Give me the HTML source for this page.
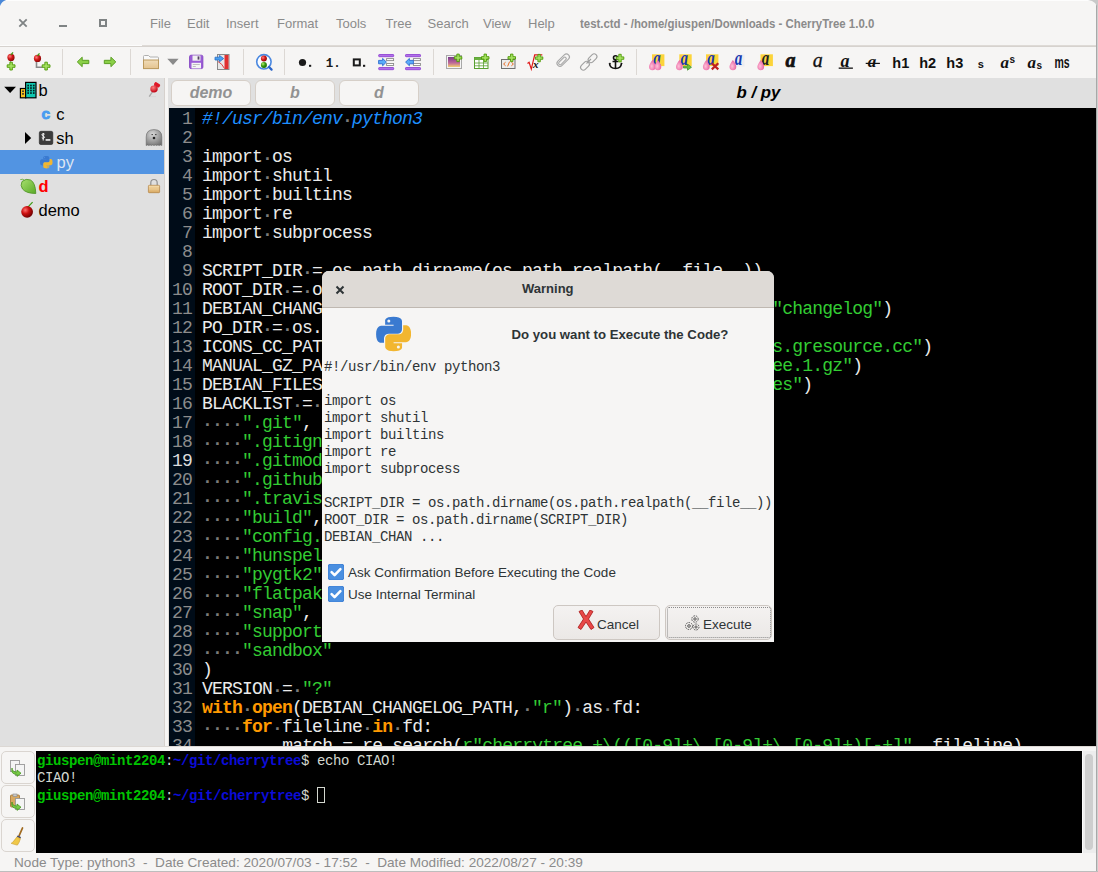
<!DOCTYPE html><html><head><meta charset="utf-8"><style>
*{margin:0;padding:0;box-sizing:border-box}
html,body{width:1098px;height:872px;overflow:hidden;background:#f6f5f4}
body{position:relative;font-family:"Liberation Sans",sans-serif}
.a{position:absolute}
.mono{font-family:"Liberation Mono",monospace}
.menu{top:16px;font-size:13px;color:#8b8b8b;line-height:16px}
.sep{position:absolute;top:49px;width:1px;height:26px;background:#dcd8d4}
#tree{left:0;top:78px;width:164px;height:668px;background:#e0e0e0}
.row{position:absolute;left:0;width:164px;height:24px;font-size:16.5px;line-height:25px;color:#000}
#tabbar{left:168px;top:78px;width:928px;height:30px;background:#e0e0e0}
.tab{position:absolute;top:80px;height:26px;width:80px;border:1px solid #d6cfc8;border-radius:6px;background:#f6f5f4;color:#929292;font-weight:bold;font-style:italic;font-size:16px;text-align:center;line-height:24px}
#editor{left:169px;top:108px;width:927px;height:638px;background:#000;overflow:hidden}
#gutter{left:0;top:0;width:26px;height:638px;background:#000c18}
.code{position:absolute;left:0;top:0;font-family:"Liberation Mono",monospace;font-size:18px;letter-spacing:-0.8px;line-height:19px;white-space:pre;color:#ebebeb}
.ln{position:absolute;left:0;top:0;width:23px;text-align:right;font-family:"Liberation Mono",monospace;font-size:18px;letter-spacing:-0.8px;line-height:19px;white-space:pre;color:#8c8c8c}
.d{color:#7a7a7a;font-weight:bold;position:relative;top:2px}
.s{color:#33cc33}
.k{color:#ff9900;font-weight:bold}
.c{color:#1e8fff;font-style:italic}
#term{left:36px;top:751px;width:1046px;height:102px;background:#000;overflow:hidden}
.tl{position:absolute;left:1px;font-family:"Liberation Mono",monospace;font-size:14px;letter-spacing:-0.4px;line-height:17px;white-space:pre;color:#d3d7cf}
.tg{color:#00c400;font-weight:bold}
.tb{color:#0c0cd8;font-weight:bold}
.tbtn{position:absolute;left:1px;width:34px;height:33px;border:1px solid #dad5d0;border-radius:5px;background:#f6f5f4}
#status{left:14px;top:855px;font-size:13.6px;color:#8b8b8b;line-height:16px;white-space:pre}
#dlg{left:322px;top:271px;width:452px;height:371px;background:#f6f5f4;border-radius:7px 7px 0 0;overflow:hidden}
#dlghead{left:0;top:0;width:452px;height:37px;background:#dedad6;border-bottom:1px solid #bfb8b1}
.dmono{position:absolute;left:2px;font-family:"Liberation Mono",monospace;font-size:14px;letter-spacing:-0.4px;line-height:17px;white-space:pre;color:#2e3436}
.btn{position:absolute;top:605px;height:35px;border:1px solid #cdc7c2;border-radius:5px;background:linear-gradient(#f4f2f1,#ebe8e6);font-size:13.5px;color:#2e3436}
.cb{position:absolute;left:6px;width:16px;height:16px;border-radius:3px;background:#4a90d9}
</style></head><body>
<div class="a" style="left:0;top:0;width:1096px;height:46px;background:#f6f5f4;border-radius:8px 8px 0 0"></div>
<div class="a" style="left:0;top:46px;width:1096px;height:1px;background:#d6d2ce"></div><div class="a" style="left:142px;top:45px;width:954px;height:1px;background:#dedad6"></div><div class="a" style="left:0;top:45px;width:142px;height:1px;background:#fcfcfc"></div>
<div class="a" style="left:1096px;top:0;width:1px;height:872px;background:#a8a8a8"></div><div class="a" style="left:1097px;top:0;width:1px;height:872px;background:#d0d0d0"></div>
<div class="a" style="left:0;top:871px;width:1098px;height:1px;background:#bdbdbd"></div>
<svg class="a" style="left:0;top:0" width="8" height="8"><path d="M0 0H6Q1.5 1.5 0 6Z" fill="#4a88d8"/></svg>
<div class="a" style="left:6px;top:0;width:1084px;height:1px;background:#fdfdfd"></div>
<svg class="a" style="left:1088px;top:0" width="10" height="10"><path d="M0 0H10V10Q9 1 0 0Z" fill="#c8c8c8"/></svg>
<svg class="a" style="left:18px;top:18px" width="10" height="10"><path d="M1.3 1.3L8.7 8.7M8.7 1.3L1.3 8.7" stroke="#7f8384" stroke-width="1.8"/></svg>
<div class="a" style="left:59px;top:25px;width:8px;height:2px;background:#7f8384"></div>
<div class="a" style="left:99px;top:19px;width:8px;height:8px;border:2px solid #7f8384"></div>
<div class="a menu" style="left:150px">File</div>
<div class="a menu" style="left:187px">Edit</div>
<div class="a menu" style="left:226px">Insert</div>
<div class="a menu" style="left:277px">Format</div>
<div class="a menu" style="left:336px">Tools</div>
<div class="a menu" style="left:385.5px">Tree</div>
<div class="a menu" style="left:427.5px">Search</div>
<div class="a menu" style="left:483px">View</div>
<div class="a menu" style="left:528px">Help</div>
<div class="a menu" style="left:579.5px;font-weight:bold;font-size:12px;transform:scaleX(0.951);transform-origin:0 0;white-space:nowrap">test.ctd - /home/giuspen/Downloads - CherryTree 1.0.0</div>
<div class="sep" style="left:62px"></div>
<div class="sep" style="left:130px"></div>
<div class="sep" style="left:243px"></div>
<div class="sep" style="left:284px"></div>
<div class="sep" style="left:433px"></div>
<div class="sep" style="left:636px"></div>
<svg class="a" style="left:0;top:46px" width="1096" height="32" viewBox="0 46 1096 32"><defs><radialGradient id="gch" cx="0.35" cy="0.35" r="0.7"><stop offset="0" stop-color="#ff8080"/><stop offset="0.5" stop-color="#d01818"/><stop offset="1" stop-color="#8a0808"/></radialGradient><radialGradient id="ggr" cx="0.35" cy="0.35" r="0.7"><stop offset="0" stop-color="#b8f070"/><stop offset="0.5" stop-color="#3a9a10"/><stop offset="1" stop-color="#1a6a00"/></radialGradient><linearGradient id="gfold" x1="0" y1="0" x2="0" y2="1"><stop offset="0" stop-color="#f0dcb8"/><stop offset="1" stop-color="#e4c490"/></linearGradient><linearGradient id="gimg" x1="0" y1="0" x2="0" y2="1"><stop offset="0" stop-color="#7a3a8a"/><stop offset="0.6" stop-color="#c06a9a"/><stop offset="1" stop-color="#f0d070"/></linearGradient><radialGradient id="gdrop" cx="0.4" cy="0.6" r="0.6"><stop offset="0" stop-color="#ffc0d8"/><stop offset="1" stop-color="#e860a0"/></radialGradient></defs><path d="M10.5 60.5v2" stroke="#999" stroke-width="1.2"/><circle cx="11" cy="57.4" r="3.6" fill="url(#gch)"/><path d="M11 54.8 l2 -2.5" stroke="#3a9a10" stroke-width="1.3"/><path d="M9.852 62.2h2.496v2.652h2.652v2.496h-2.652v2.652h-2.496v-2.652h-2.652v-2.496h2.652z" fill="#a4e060" stroke="#4e9a06" stroke-width="0.9" stroke-linejoin="miter"/><path d="M36.5 61v6.2h6" fill="none" stroke="#8a8a8a" stroke-width="1.6"/><circle cx="37.5" cy="58.4" r="3.6" fill="url(#gch)"/><path d="M37.5 55.8 l2 -2.5" stroke="#3a9a10" stroke-width="1.3"/><path d="M44.852000000000004 62.2h2.496v2.652h2.652v2.496h-2.652v2.652h-2.496v-2.652h-2.652v-2.496h2.652z" fill="#a4e060" stroke="#4e9a06" stroke-width="0.9" stroke-linejoin="miter"/><path d="M77.3 61.9L82.2 57.2V60.3H88.8V63.6H82.2V66.7Z" fill="#8bd048" stroke="#5a9e22" stroke-width="1" stroke-linejoin="round"/><path d="M115.8 61.9L110.9 57.2V60.3H104.3V63.6H110.9V66.7Z" fill="#8bd048" stroke="#5a9e22" stroke-width="1" stroke-linejoin="round"/><path d="M143.5 68.5V56.5q0-1 1-1h4l1.5 1.5h7.5q1 0 1 1V68.5z" fill="#fafafa" stroke="#b0b0b0" stroke-width="1"/><rect x="143.5" y="60" width="15" height="8.6" fill="url(#gfold)" stroke="#bb9a5e" stroke-width="1"/><path d="M167.3 58.8H178.6L173 64.9Z" fill="#8a8a8a"/><rect x="189.5" y="55.2" width="13.4" height="13.4" rx="1.5" fill="#9a5cd6" stroke="#8040c0" stroke-width="0.8"/><rect x="192.5" y="55.5" width="8" height="5.2" fill="#f0f0f0"/><rect x="197.6" y="56.4" width="1.8" height="3.2" fill="#504060"/><rect x="191.5" y="62.8" width="9.5" height="5.6" fill="#f4f4f4"/><path d="M192.8 64.5h7M192.8 66.5h3" stroke="#b0b0b0" stroke-width="0.8"/><rect x="217.5" y="54.5" width="11.5" height="15" fill="#e8e8e8" stroke="#8a8a8a" stroke-width="1"/><rect x="224.5" y="55" width="4" height="14" fill="#e03030"/><path d="M218 61.5q4 2 6.5 7" fill="none" stroke="#e03030" stroke-width="0.9"/><path d="M215 57.2h4.5v-1.8l4.2 3.2l-4.2 3.2v-1.8H215z" fill="#4aa0f0" stroke="#2a70c8" stroke-width="0.8"/><circle cx="263.9" cy="61.8" r="7.2" fill="#fbfdff" stroke="#4a88e0" stroke-width="1.6"/><path d="M269 67l2.6 2.6" stroke="#2a64c8" stroke-width="2.2" stroke-linecap="round"/><circle cx="263.9" cy="58.6" r="3" fill="url(#gch)"/><circle cx="263.9" cy="64.9" r="3" fill="url(#ggr)"/><circle cx="302.5" cy="62.5" r="3.6" fill="#1a1a1a"/><rect x="309" y="64.8" width="2.2" height="2" fill="#1a1a1a"/><text x="325.8" y="67" font-family="Liberation Mono" font-weight="bold" font-size="12.5" fill="#1a1a1a">1.</text><rect x="353.8" y="59.4" width="6" height="6" fill="none" stroke="#1a1a1a" stroke-width="2"/><rect x="363" y="64.8" width="2.2" height="2" fill="#1a1a1a"/><rect x="378.7" y="54.5" width="15" height="2.2" rx="0.6" fill="#b070e8" stroke="#8a3ad0" stroke-width="0.8"/><rect x="378.7" y="67.5" width="15" height="2.2" rx="0.6" fill="#b070e8" stroke="#8a3ad0" stroke-width="0.8"/><rect x="386.59999999999997" y="58.6" width="7" height="2" fill="#fff" stroke="#8a8a8a" stroke-width="0.9"/><rect x="386.59999999999997" y="63.5" width="7" height="2" fill="#fff" stroke="#8a8a8a" stroke-width="0.9"/><rect x="405.5" y="54.5" width="15" height="2.2" rx="0.6" fill="#b070e8" stroke="#8a3ad0" stroke-width="0.8"/><rect x="405.5" y="67.5" width="15" height="2.2" rx="0.6" fill="#b070e8" stroke="#8a3ad0" stroke-width="0.8"/><rect x="413.4" y="58.6" width="7" height="2" fill="#fff" stroke="#8a8a8a" stroke-width="0.9"/><rect x="413.4" y="63.5" width="7" height="2" fill="#fff" stroke="#8a8a8a" stroke-width="0.9"/><path d="M378.6 60.4h4v-2l3.8 3.7l-3.8 3.7v-2h-4z" fill="#5aacf8" stroke="#2a6ad0" stroke-width="0.9" stroke-linejoin="round"/><path d="M413.4 60.4h-4v-2l-3.8 3.7l3.8 3.7v-2h4z" fill="#5aacf8" stroke="#2a6ad0" stroke-width="0.9" stroke-linejoin="round"/><rect x="446.5" y="55.5" width="15" height="13" fill="#f4f4f4" stroke="#a8a8a8" stroke-width="1"/><rect x="448" y="57" width="12" height="10" fill="url(#gimg)"/><path d="M456.85 54.1h2.4v2.55h2.55v2.4h-2.55v2.55h-2.4v-2.55h-2.55v-2.4h2.55z" fill="#a4e060" stroke="#4e9a06" stroke-width="0.9" stroke-linejoin="miter"/><rect x="474.5" y="57.5" width="13.5" height="11" fill="#fff" stroke="#58a030" stroke-width="1"/><rect x="474.5" y="57.5" width="13.5" height="2.5" fill="#6ab040"/><path d="M474.5 63h13.5M474.5 65.8h13.5M479 60v8.5M483.5 60v8.5" stroke="#58a030" stroke-width="0.8"/><path d="M484.05 54.1h2.4v2.55h2.55v2.4h-2.55v2.55h-2.4v-2.55h-2.55v-2.4h2.55z" fill="#a4e060" stroke="#4e9a06" stroke-width="0.9" stroke-linejoin="miter"/><rect x="501.5" y="59.5" width="13.5" height="9" fill="#ececec" stroke="#707070" stroke-width="1"/><path d="M505.6 62.2l-2 1.8l2 1.8M511.4 62.2l2 1.8l-2 1.8M509.6 61.6l-2 4.8" fill="none" stroke="#e86a20" stroke-width="1"/><path d="M510.55 54.1h2.4v2.55h2.55v2.4h-2.55v2.55h-2.4v-2.55h-2.55v-2.4h2.55z" fill="#a4e060" stroke="#4e9a06" stroke-width="0.9" stroke-linejoin="miter"/><path d="M527.5 63.5l1.6-1.2l2.2 6.8l3.4-14.3h7.6" fill="none" stroke="#e01818" stroke-width="1.2"/><text x="533" y="67.5" font-family="Liberation Serif" font-style="italic" font-weight="bold" font-size="11" fill="#111">x</text><path d="M537.916 54.4h2.3680000000000003v2.516h2.516v2.3680000000000003h-2.516v2.516h-2.3680000000000003v-2.516h-2.516v-2.3680000000000003h2.516z" fill="#a4e060" stroke="#4e9a06" stroke-width="0.9" stroke-linejoin="miter"/><g fill="none" stroke="#a8a8a8" stroke-width="1.1"><rect x="556.5" y="58.5" width="15" height="6" rx="3" transform="rotate(-45 562 61.8)"/><rect x="558.2" y="60" width="9.5" height="3" rx="1.5" transform="rotate(-45 562 61.8)"/></g><g fill="none" stroke="#a0a0a0" stroke-width="1.1"><rect x="580" y="63" width="10" height="5.5" rx="2.7" transform="rotate(-45 585 65.8)"/><rect x="587.5" y="55.5" width="10" height="5.5" rx="2.7" transform="rotate(-45 592.5 58.2)"/><path d="M586.5 63.5l4.5-4.5"/></g><g fill="none" stroke="#111" stroke-width="1.6"><circle cx="615.5" cy="57.8" r="2"/><path d="M615.5 60v8.3M612.5 61.5h6"/><path d="M609.5 63.5q0.5 5 6 5q5.5 0 6-5"/></g><path d="M608.6 63.8l1.4-1.4l1.2 1.8zM622.8 63.8l-1.4-1.4l-1.2 1.8z" fill="#111"/><path d="M618.784 54.3h2.432v2.5839999999999996h2.5839999999999996v2.432h-2.5839999999999996v2.5839999999999996h-2.432v-2.5839999999999996h-2.5839999999999996v-2.432h2.5839999999999996z" fill="#a4e060" stroke="#4e9a06" stroke-width="0.9" stroke-linejoin="miter"/><rect x="652" y="54.3" width="12.4" height="11.8" fill="#fcd43a"/><text x="653.2" y="64.6" font-family="Liberation Serif" font-style="italic" font-weight="bold" font-size="15" fill="#1838b0" transform="translate(0 -22.609999999999996) scale(1 1.35)">a</text><path d="M652.4 60q3.4 4.41 3.4 6.86a3.4 3.4 0 0 1 -6.8 0q0 -2.45 3.4 -6.86z" fill="url(#gdrop)"/><path d="M657.9 60q3.4 4.41 3.4 6.86a3.4 3.4 0 0 1 -6.8 0q0 -2.45 3.4 -6.86z" fill="url(#gdrop)"/><rect x="679.3" y="54.3" width="12.4" height="11.8" fill="#fcd43a"/><text x="680.5" y="64.6" font-family="Liberation Serif" font-style="italic" font-weight="bold" font-size="15" fill="#1838b0" transform="translate(0 -22.609999999999996) scale(1 1.35)">a</text><path d="M679.4 60q3.4 4.41 3.4 6.86a3.4 3.4 0 0 1 -6.8 0q0 -2.45 3.4 -6.86z" fill="url(#gdrop)"/><path d="M683.5 66.2h4v-2.2l4 3.2l-4 3v-2.2h-4z" fill="#6ac040" stroke="#3a8a20" stroke-width="0.7"/><rect x="706" y="54.3" width="12.4" height="11.8" fill="#fcd43a"/><text x="707.2" y="64.6" font-family="Liberation Serif" font-style="italic" font-weight="bold" font-size="15" fill="#1838b0" transform="translate(0 -22.609999999999996) scale(1 1.35)">a</text><path d="M706.3 60q3.4 4.41 3.4 6.86a3.4 3.4 0 0 1 -6.8 0q0 -2.45 3.4 -6.86z" fill="url(#gdrop)"/><path d="M711.8 63.2l6.5 6.2M718.3 63.2l-6.5 6.2" stroke="#c02020" stroke-width="2.2"/><rect x="735.5" y="54.5" width="9" height="12" fill="#ececf0"/><text x="734.7" y="64.6" font-family="Liberation Serif" font-style="italic" font-weight="bold" font-size="15" fill="#1838b0" transform="translate(0 -22.609999999999996) scale(1 1.35)">a</text><path d="M732.9 60q3.4 4.41 3.4 6.86a3.4 3.4 0 0 1 -6.8 0q0 -2.45 3.4 -6.86z" fill="url(#gdrop)"/><rect x="760.5" y="54.3" width="12.4" height="11.8" fill="#fcd43a"/><text x="761.7" y="64.6" font-family="Liberation Serif" font-style="italic" font-weight="bold" font-size="15" fill="#222" transform="translate(0 -22.609999999999996) scale(1 1.35)">a</text><path d="M760.8 60q3.4 4.41 3.4 6.86a3.4 3.4 0 0 1 -6.8 0q0 -2.45 3.4 -6.86z" fill="url(#gdrop)"/><text x="785.5" y="67.2" font-family="Liberation Serif" font-style="italic" font-weight="bold" font-size="20" fill="#111" stroke="#111" stroke-width="0.7">a</text><text x="812.8" y="67.2" font-family="Liberation Serif" font-style="italic" font-size="20" fill="#111" stroke="#111" stroke-width="0.3">a</text><text x="840.5" y="66.6" font-family="Liberation Serif" font-style="italic" font-weight="bold" font-size="18" fill="#111">a</text><rect x="838.7" y="67.5" width="14.2" height="1.3" fill="#111"/><text x="867.8" y="67.4" font-family="Liberation Serif" font-style="italic" font-weight="bold" font-size="17" fill="#111">a</text><rect x="865.7" y="62.8" width="14.2" height="1.2" fill="#111"/><text x="892.3" y="67.9" font-family="Liberation Sans" font-weight="bold" font-size="14.5" fill="#111">h1</text><text x="919.2" y="67.9" font-family="Liberation Sans" font-weight="bold" font-size="14.5" fill="#111">h2</text><text x="946.3" y="67.9" font-family="Liberation Sans" font-weight="bold" font-size="14.5" fill="#111">h3</text><text x="977.8" y="67.6" font-family="Liberation Sans" font-weight="bold" font-size="11" fill="#111">s</text><text x="1000.5" y="68.4" font-family="Liberation Serif" font-style="italic" font-weight="bold" font-size="17" fill="#111">a</text><text x="1009.5" y="62.5" font-family="Liberation Sans" font-weight="bold" font-size="10" fill="#111">s</text><text x="1027.5" y="68.4" font-family="Liberation Serif" font-style="italic" font-weight="bold" font-size="17" fill="#111">a</text><text x="1036.5" y="69" font-family="Liberation Sans" font-weight="bold" font-size="10" fill="#111">s</text><text x="1054.5" y="67.8" font-family="Liberation Sans" font-weight="bold" font-size="17" fill="#111" textLength="15.2" lengthAdjust="spacingAndGlyphs">ms</text></svg>
<div id="tree" class="a">
</div>
<div class="a" style="left:0;top:150px;width:164px;height:24px;background:#5294e2"></div>
<div class="row" style="left:38.5px;top:78px;width:auto;">b</div>
<div class="row" style="left:56.3px;top:102px;width:auto;">c</div>
<div class="row" style="left:56.3px;top:126px;width:auto;">sh</div>
<div class="row" style="left:56.5px;top:150px;width:auto;color:#dde6f2;">py</div>
<div class="row" style="left:38.5px;top:174px;width:auto;color:#ff0000;font-weight:bold;">d</div>
<div class="row" style="left:38.5px;top:198px;width:auto;">demo</div>
<svg class="a" style="left:0;top:78px" width="164" height="150" viewBox="0 78 164 150"><defs><radialGradient id="tch" cx="0.35" cy="0.35" r="0.7"><stop offset="0" stop-color="#ff7070"/><stop offset="0.45" stop-color="#cc1010"/><stop offset="1" stop-color="#6a0000"/></radialGradient><linearGradient id="tleaf" x1="0" y1="0" x2="1" y2="1"><stop offset="0" stop-color="#a8e070"/><stop offset="1" stop-color="#5aaa28"/></linearGradient><linearGradient id="tlock" x1="0" y1="0" x2="0" y2="1"><stop offset="0" stop-color="#f8e0b0"/><stop offset="1" stop-color="#d8a860"/></linearGradient><radialGradient id="tghost" cx="0.4" cy="0.3" r="0.8"><stop offset="0" stop-color="#d8d8d8"/><stop offset="1" stop-color="#707070"/></radialGradient><radialGradient id="tpin" cx="0.4" cy="0.3" r="0.7"><stop offset="0" stop-color="#ff8080"/><stop offset="1" stop-color="#c00010"/></radialGradient></defs><path d="M4.2 86.8H16L10.1 92.9z" fill="#000"/><rect x="20.4" y="88.5" width="5.4" height="9.3" fill="#f8c020" stroke="#000" stroke-width="1.2"/><rect x="25.6" y="82.4" width="10.4" height="15.4" fill="#10c8b0" stroke="#000" stroke-width="1.2"/><g fill="#022"><rect x="27.299999999999997" y="84.7" width="1.7" height="1.7"/><rect x="30.099999999999998" y="84.7" width="1.7" height="1.7"/><rect x="32.9" y="84.7" width="1.7" height="1.7"/><rect x="27.299999999999997" y="87.2" width="1.7" height="1.7"/><rect x="30.099999999999998" y="87.2" width="1.7" height="1.7"/><rect x="32.9" y="87.2" width="1.7" height="1.7"/><rect x="27.299999999999997" y="89.7" width="1.7" height="1.7"/><rect x="30.099999999999998" y="89.7" width="1.7" height="1.7"/><rect x="32.9" y="89.7" width="1.7" height="1.7"/><rect x="27.299999999999997" y="92.2" width="1.7" height="1.7"/><rect x="30.099999999999998" y="92.2" width="1.7" height="1.7"/><rect x="32.9" y="92.2" width="1.7" height="1.7"/></g><rect x="22" y="90.5" width="2" height="1.4" fill="#333"/><rect x="22" y="93.2" width="2" height="1.4" fill="#333"/><text x="41.6" y="118.5" font-family="Liberation Sans" font-weight="bold" font-size="15.5" fill="#4a9cf0" stroke="#4a9cf0" stroke-width="0.9">c</text><path d="M25 132V143.9L31.2 138z" fill="#000"/><rect x="39.3" y="131.3" width="13.5" height="13.2" rx="1.6" fill="#3c3c3c" stroke="#222" stroke-width="0.6"/><path d="M43.2 133v7.5M44.6 134.2q-1-0.8-2.2-0.2q-1 0.8 0 1.6l1.6 0.8q1 0.8 0 1.6q-1.2 0.6-2.2-0.2" fill="none" stroke="#fff" stroke-width="1"/><rect x="45.6" y="139.2" width="4.8" height="1.5" fill="#fff"/><path d="M20.3 179.6q3 -1 4 0.6" fill="none" stroke="#5aaa28" stroke-width="0.8"/><path d="M22 181.5q4-3.5 8.5-1.5q5 2.5 5.3 13.5q-9.5 0-13.3-4.5q-2.5-3.5-0.5-7.5z" fill="url(#tleaf)" stroke="#4a9020" stroke-width="0.8"/><path d="M27.6 207.4L32.6 202.2" stroke="#3a9a10" stroke-width="1.2"/><circle cx="27.1" cy="211.8" r="5.9" fill="url(#tch)"/><path d="M152.6 91.6L149.2 96.6" stroke="#a8a8a8" stroke-width="1.3"/><path d="M150 96.6h6" stroke="#d0d0d0" stroke-width="0.6"/><rect x="154" y="83" width="6.2" height="3.4" rx="1.2" fill="#e01828" transform="rotate(32 157.1 84.7)"/><path d="M154.5 84.8l3.2 2l-1.2 2.5l-3-1.5z" fill="#d81828"/><ellipse cx="154" cy="89" rx="3.7" ry="3.4" fill="url(#tpin)"/><path d="M146.2 145.5v-8.5q0-7.4 7.8-7.4q7.8 0 7.8 7.4v8.5q-1.3-1.2-2.6 0q-1.3-1.2-2.6 0q-1.3-1.2-2.6 0q-1.3-1.2-2.6 0q-1.3-1.2-2.6 0q-1.3-1.2-2.6 0z" fill="url(#tghost)" stroke="#666" stroke-width="0.6"/><circle cx="154" cy="138" r="1.3" fill="#222"/><path d="M151.5 134.6h1.4M155.1 134.6h1.4" stroke="#222" stroke-width="0.9"/><path d="M150.8 185.5v-2.6q0-3.4 3.2-3.4q3.2 0 3.2 3.4v2.6" fill="none" stroke="#909090" stroke-width="1.2"/><rect x="148.4" y="185.3" width="11.2" height="7.4" rx="0.8" fill="url(#tlock)" stroke="#b08040" stroke-width="0.7"/><path d="M149 187.6h10M149 189.6h10" stroke="#e8c890" stroke-width="0.6"/></svg><svg class="a" style="left:40px;top:156px" width="12.5" height="12.5" viewBox="0 0 110 110">
<defs><linearGradient id="pyb40" x1="0" y1="0" x2="1" y2="1"><stop offset="0" stop-color="#5a9fd4"/><stop offset="1" stop-color="#306998"/></linearGradient>
<linearGradient id="pyy40" x1="0" y1="0" x2="1" y2="1"><stop offset="0" stop-color="#ffd43b"/><stop offset="1" stop-color="#e8a820"/></linearGradient></defs>
<path fill="#3a7ad0" d="M54.9 1C27 1 28.7 13.1 28.7 13.1v12.5h26.6v3.8H18.1S0.3 27.4 0.3 55.5c0 28.1 15.6 27.1 15.6 27.1h9.3V69.6s-0.5-15.6 15.3-15.6h26.4s14.8 0.2 14.8-14.3V15.8S83.9 1 54.9 1zM40.3 9.4a4.8 4.8 0 1 1 0 9.6a4.8 4.8 0 1 1 0-9.6z"/>
<path fill="#f2b630" d="M55.7 109c27.9 0 26.2-12.1 26.2-12.1V84.4H55.3v-3.8h37.2s17.8 2 17.8-26.1c0-28.1-15.6-27.1-15.6-27.1h-9.3v13s0.5 15.6-15.3 15.6H43.7s-14.8-0.2-14.8 14.3v23.9S26.7 109 55.7 109zm14.6-8.4a4.8 4.8 0 1 1 0-9.6a4.8 4.8 0 1 1 0 9.6z"/>
</svg>
<div class="a" style="left:164px;top:78px;width:4px;height:668px;background:#f6f5f4"></div>
<div class="a" style="left:168px;top:78px;width:1px;height:30px;background:#cfcfcf"></div><div class="a" style="left:168px;top:108px;width:1px;height:638px;background:#e2deda"></div><div class="a" style="left:164px;top:78px;width:1px;height:668px;background:#d6d1cd"></div>
<div id="tabbar" class="a"></div>
<div class="tab" style="left:171px">demo</div>
<div class="tab" style="left:255px">b</div>
<div class="tab" style="left:339px">d</div>
<div class="a" style="left:736.5px;top:83.5px;font-size:16.8px;font-weight:bold;font-style:italic;color:#000;line-height:18px">b / py</div>
<div id="editor" class="a"><div id="gutter" class="a"></div>
<div class="ln" style="top:1.5px">1
2
3
4
5
6
7
8
9
10
11
12
13
14
15
16
17
18
<span style="color:#dcdcdc">19</span>
20
21
22
23
24
25
26
27
28
29
30
31
32
33
34</div>
<div class="code" style="left:33px;top:1.5px"><span class="c">#!/usr/bin/env</span><span class="d">·</span><span class="c">python3</span>

import<span class="d">·</span>os
import<span class="d">·</span>shutil
import<span class="d">·</span>builtins
import<span class="d">·</span>re
import<span class="d">·</span>subprocess

SCRIPT_DIR<span class="d">·</span>=<span class="d">·</span>os.path.dirname(os.path.realpath(__file__))
ROOT_DIR<span class="d">·</span>=<span class="d">·</span>os.path.dirname(SCRIPT_DIR)
DEBIAN_CHANGELOG_PATH<span class="d">·</span>=<span class="d">·</span>os.path.join(ROOT_DIR,<span class="d">·</span><span class="s">&quot;debian&quot;</span>,<span class="d">·</span><span class="s">&quot;changelog&quot;</span>)
PO_DIR<span class="d">·</span>=<span class="d">·</span>os.path.join(ROOT_DIR,<span class="d">·</span><span class="s">&quot;po&quot;</span>)
ICONS_CC_PATH<span class="d">·</span>=<span class="d">·</span>os.path.join(ROOT_DIR,<span class="d">·</span><span class="s">&quot;src&quot;</span>,<span class="d">·</span><span class="s">&quot;ct&quot;</span>,<span class="d">·</span><span class="s">&quot;icons.gresource.cc&quot;</span>)
MANUAL_GZ_PATH<span class="d">·</span>=<span class="d">·</span>os.path.join(ROOT_DIR,<span class="d">·</span><span class="s">&quot;data&quot;</span>,<span class="d">·</span><span class="s">&quot;cherrytree.1.gz&quot;</span>)
DEBIAN_FILES<span class="d">·</span>=<span class="d">·</span>os.path.join(ROOT_DIR,<span class="d">·</span><span class="s">&quot;debian&quot;</span>,<span class="d">·</span><span class="s">&quot;data_files&quot;</span>)
BLACKLIST<span class="d">·</span>=<span class="d">·</span>(
<span class="d">·</span><span class="d">·</span><span class="d">·</span><span class="d">·</span><span class="s">&quot;.git&quot;</span>,
<span class="d">·</span><span class="d">·</span><span class="d">·</span><span class="d">·</span><span class="s">&quot;.gitignore&quot;</span>,
<span class="d">·</span><span class="d">·</span><span class="d">·</span><span class="d">·</span><span class="s">&quot;.gitmodules&quot;</span>,
<span class="d">·</span><span class="d">·</span><span class="d">·</span><span class="d">·</span><span class="s">&quot;.github&quot;</span>,
<span class="d">·</span><span class="d">·</span><span class="d">·</span><span class="d">·</span><span class="s">&quot;.travis.yml&quot;</span>,
<span class="d">·</span><span class="d">·</span><span class="d">·</span><span class="d">·</span><span class="s">&quot;build&quot;</span>,
<span class="d">·</span><span class="d">·</span><span class="d">·</span><span class="d">·</span><span class="s">&quot;config.h&quot;</span>,
<span class="d">·</span><span class="d">·</span><span class="d">·</span><span class="d">·</span><span class="s">&quot;hunspell&quot;</span>,
<span class="d">·</span><span class="d">·</span><span class="d">·</span><span class="d">·</span><span class="s">&quot;pygtk2&quot;</span>,
<span class="d">·</span><span class="d">·</span><span class="d">·</span><span class="d">·</span><span class="s">&quot;flatpak&quot;</span>,
<span class="d">·</span><span class="d">·</span><span class="d">·</span><span class="d">·</span><span class="s">&quot;snap&quot;</span>,
<span class="d">·</span><span class="d">·</span><span class="d">·</span><span class="d">·</span><span class="s">&quot;support&quot;</span>,
<span class="d">·</span><span class="d">·</span><span class="d">·</span><span class="d">·</span><span class="s">&quot;sandbox&quot;</span>
)
VERSION<span class="d">·</span>=<span class="d">·</span><span class="s">&quot;?&quot;</span>
<span class="k">with</span><span class="d">·</span><span class="k">open</span>(DEBIAN_CHANGELOG_PATH,<span class="d">·</span><span class="s">&quot;r&quot;</span>)<span class="d">·</span>as<span class="d">·</span>fd:
<span class="d">·</span><span class="d">·</span><span class="d">·</span><span class="d">·</span><span class="k">for</span><span class="d">·</span>fileline<span class="d">·</span><span class="k">in</span><span class="d">·</span>fd:
<span class="d">·</span><span class="d">·</span><span class="d">·</span><span class="d">·</span><span class="d">·</span><span class="d">·</span><span class="d">·</span><span class="d">·</span>match<span class="d">·</span>=<span class="d">·</span>re.search(<span class="s">r&quot;cherrytree.+\(([0-9]+\.[0-9]+\.[0-9]+)[-+]&quot;</span>,<span class="d">·</span>fileline)</div>
</div>
<div class="a" style="left:0;top:746px;width:1096px;height:5px;background:#f6f5f4"></div><div class="a" style="left:0;top:746px;width:1096px;height:1px;background:#dcd8d4"></div>
<div class="tbtn" style="top:751px"></div>
<div class="tbtn" style="top:785px"></div>
<div class="tbtn" style="top:819px"></div>
<svg class="a" style="left:8px;top:758px" width="20" height="20" viewBox="0 0 20 20"><rect x="2.5" y="2.5" width="9" height="11" fill="#f4f4f4" stroke="#999" stroke-width="0.9"/><rect x="7.5" y="6.5" width="9" height="11" fill="#f4f4f4" stroke="#999" stroke-width="0.9"/><path d="M4 10q0 4 5 4v-2l4 3.2l-4 3.2v-2q-6.5 0-5-6.4z" fill="#78c848" stroke="#3a9010" stroke-width="0.7"/></svg><svg class="a" style="left:8px;top:792px" width="20" height="20" viewBox="0 0 20 20"><rect x="2.5" y="3" width="9" height="12" rx="1" fill="#d8a860" stroke="#a07030" stroke-width="0.8"/><rect x="5" y="2" width="4" height="2.5" fill="#c8c8c8" stroke="#888" stroke-width="0.6"/><rect x="7.5" y="6.5" width="9" height="11" fill="#f4f4f4" stroke="#999" stroke-width="0.9"/><path d="M4 10q0 4 5 4v-2l4 3.2l-4 3.2v-2q-6.5 0-5-6.4z" fill="#78c848" stroke="#3a9010" stroke-width="0.7"/></svg><svg class="a" style="left:8px;top:826px" width="20" height="20" viewBox="0 0 20 20"><path d="M14.5 2l-3.5 8" stroke="#a06a20" stroke-width="1.8" stroke-linecap="round"/><path d="M9.5 9.5l3.5 1.6l-0.6 1.5l-3.6-1.5z" fill="#404870"/><path d="M8.8 11l3.6 1.6q-1 4-3 6.5q-3-0.5-6.2-1.8q1.2-0.5 2.5-2.2q2-2.5 3.1-4.1z" fill="#f0c848" stroke="#c89820" stroke-width="0.6"/></svg>
<div id="term" class="a">
<div class="tl" style="top:1.5px"><span class="tg">giuspen@mint2204</span>:<span class="tb">~/git/cherrytree</span>$ echo CIAO!
CIAO!
<span class="tg">giuspen@mint2204</span>:<span class="tb">~/git/cherrytree</span>$ <span style="display:inline-block;width:8px;height:16px;border:1px solid #d3d7cf;vertical-align:-3px"></span></div>
</div>
<div class="a" style="left:1082px;top:751px;width:1px;height:103px;background:#fafafa"></div><div class="a" style="left:1083px;top:751px;width:13px;height:102px;background:#ededed"></div>
<div class="a" style="left:1085px;top:754px;width:8px;height:96px;background:#cecece;border-radius:4px"></div>
<div id="status" class="a">Node Type: python3  -  Date Created: 2020/07/03 - 17:52  -  Date Modified: 2022/08/27 - 20:39</div>
<div id="dlg" class="a">
<div id="dlghead" class="a"></div>
<svg class="a" style="left:13px;top:14px" width="10" height="10"><path d="M1.5 1.5L8.5 8.5M8.5 1.5L1.5 8.5" stroke="#2e3436" stroke-width="2"/></svg>
<div class="a" style="left:200px;top:10px;font-size:13px;font-weight:bold;color:#2e3436;line-height:16px">Warning</div>
<svg class="a" style="left:53.5px;top:45px" width="35" height="36" viewBox="0 0 110 110">
<defs><linearGradient id="pyb53" x1="0" y1="0" x2="1" y2="1"><stop offset="0" stop-color="#5a9fd4"/><stop offset="1" stop-color="#306998"/></linearGradient>
<linearGradient id="pyy53" x1="0" y1="0" x2="1" y2="1"><stop offset="0" stop-color="#ffd43b"/><stop offset="1" stop-color="#e8a820"/></linearGradient></defs>
<path fill="#3a7ad0" d="M54.9 1C27 1 28.7 13.1 28.7 13.1v12.5h26.6v3.8H18.1S0.3 27.4 0.3 55.5c0 28.1 15.6 27.1 15.6 27.1h9.3V69.6s-0.5-15.6 15.3-15.6h26.4s14.8 0.2 14.8-14.3V15.8S83.9 1 54.9 1zM40.3 9.4a4.8 4.8 0 1 1 0 9.6a4.8 4.8 0 1 1 0-9.6z"/>
<path fill="#f2b630" d="M55.7 109c27.9 0 26.2-12.1 26.2-12.1V84.4H55.3v-3.8h37.2s17.8 2 17.8-26.1c0-28.1-15.6-27.1-15.6-27.1h-9.3v13s0.5 15.6-15.3 15.6H43.7s-14.8-0.2-14.8 14.3v23.9S26.7 109 55.7 109zm14.6-8.4a4.8 4.8 0 1 1 0-9.6a4.8 4.8 0 1 1 0 9.6z"/>
</svg>
<div class="a" style="left:189.5px;top:55.5px;font-size:13.2px;font-weight:bold;color:#2e3436;line-height:16px">Do you want to Execute the Code?</div>
<div class="dmono" style="top:88px">#!/usr/bin/env python3

import os
import shutil
import builtins
import re
import subprocess

SCRIPT_DIR = os.path.dirname(os.path.realpath(__file__))
ROOT_DIR = os.path.dirname(SCRIPT_DIR)
DEBIAN_CHAN ...</div>
<div class="cb" style="top:293px"></div><div class="cb" style="top:315px"></div>
<div class="a" style="left:26px;top:293.5px;font-size:13.5px;color:#2e3436;line-height:16px">Ask Confirmation Before Executing the Code</div>
<div class="a" style="left:26px;top:315.5px;font-size:13.5px;color:#2e3436;line-height:16px">Use Internal Terminal</div>
</div>
<div class="btn" style="left:552.5px;width:107px"></div>
<div class="btn" style="left:664.5px;width:107px"></div>
<div class="a" style="left:597px;top:616.5px;font-size:13.5px;color:#2e3436;line-height:16px">Cancel</div>
<div class="a" style="left:703px;top:616.5px;font-size:13.5px;color:#2e3436;line-height:16px">Execute</div>
<svg class="a" style="left:328px;top:564px" width="16" height="16"><rect x="0" y="0" width="16" height="16" rx="3" fill="#4a8fe0" stroke="#3a7ad0" stroke-width="0.8"/><path d="M3.6 8.2l3 3l5.8-6" fill="none" stroke="#fff" stroke-width="2.6" stroke-linecap="round" stroke-linejoin="round"/></svg><svg class="a" style="left:328px;top:586px" width="16" height="16"><rect x="0" y="0" width="16" height="16" rx="3" fill="#4a8fe0" stroke="#3a7ad0" stroke-width="0.8"/><path d="M3.6 8.2l3 3l5.8-6" fill="none" stroke="#fff" stroke-width="2.6" stroke-linecap="round" stroke-linejoin="round"/></svg><svg class="a" style="left:576px;top:610px" width="20" height="21" viewBox="0 0 20 21"><path d="M3 1.5l4.5 7.5l-5.5 8.5l3 2l5-7.5l5 7.5l3-2l-5.5-8.5l4.5-7.5l-3-1.5l-4 6.5l-4-6.5z" fill="#e84848" stroke="#a81818" stroke-width="0.8" stroke-linejoin="round"/></svg><svg class="a" style="left:684px;top:614px" width="18" height="18" viewBox="0 0 18 18"><g fill="none" stroke="#555" stroke-width="1"><circle cx="11" cy="5" r="3.2" stroke-dasharray="1.6 1"/><circle cx="11" cy="5" r="1.2"/><circle cx="5" cy="12" r="3.5" stroke-dasharray="1.6 1"/><circle cx="5" cy="12" r="1.3"/><circle cx="12" cy="13" r="3" stroke-dasharray="1.6 1"/><circle cx="12" cy="13" r="1.1"/></g></svg><div class="a" style="left:666.5px;top:607px;width:104px;height:31px;border:1px dotted #8a8a8a;border-radius:2px"></div>
</body></html>
